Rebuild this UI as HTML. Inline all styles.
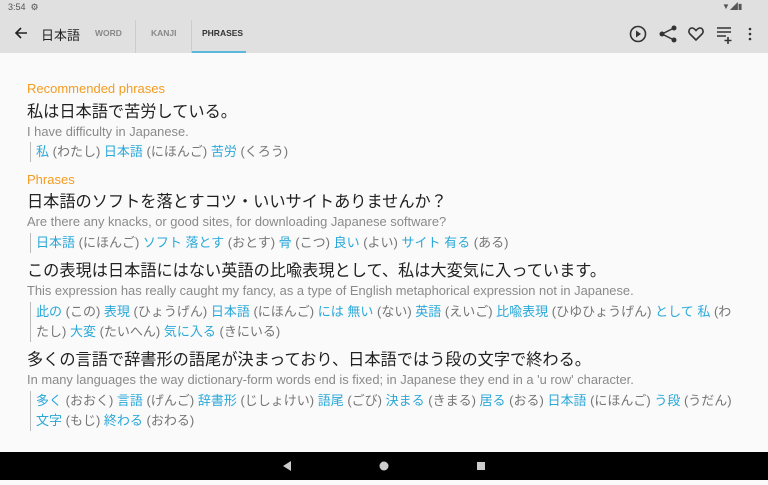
<!DOCTYPE html>
<html><head><meta charset="utf-8"><style>
body{margin:0;width:768px;height:480px;overflow:hidden;background:#fafafa;font-family:"Liberation Sans","Noto Sans CJK JP",sans-serif;position:relative}
.top{position:absolute;left:0;top:0;width:768px;height:53px;background:#e0e0e0}
.l{position:absolute;left:27px;white-space:nowrap;line-height:20px}
.h{color:#f39c1f;font-size:13px}
.j{font-size:16.2px;color:#212121}
.e{font-size:12.9px;color:#8a8a8a}
.g{font-size:13px;color:#757575;left:30px;border-left:1px solid #bbb;padding-left:5px}
.g b{font-weight:normal;color:#2aa8d8}
.tab{position:absolute;top:28px;font-size:8.5px;font-weight:bold;color:#888}
.nav{position:absolute;left:0;top:452px;width:768px;height:28px;background:#000}
</style></head><body>
<div class="top">
<div style="position:absolute;left:8px;top:2px;font-size:9px;color:#555">3:54 &nbsp;⚙</div>
<div style="position:absolute;left:722px;top:1px;font-size:8px;color:#555">▼◢▮</div>
<svg style="position:absolute;left:14px;top:26px" width="14" height="14" viewBox="0 0 14 14"><path d="M13 7H2M7 2L2 7l5 5" stroke="#222" stroke-width="1.6" fill="none"/></svg>
<div style="position:absolute;left:41px;top:25px;font-size:13px;color:#222">日本語</div>
<div class="tab" style="left:95px">WORD</div>
<div style="position:absolute;left:135px;top:20px;width:1px;height:33px;background:#ccc"></div>
<div class="tab" style="left:151px">KANJI</div>
<div style="position:absolute;left:191px;top:20px;width:1px;height:33px;background:#ccc"></div>
<div class="tab" style="left:202px;color:#333">PHRASES</div>
<div style="position:absolute;left:192px;top:51px;width:54px;height:2px;background:#5bb8dc"></div>
<svg style="position:absolute;left:628px;top:24px" width="130" height="20" viewBox="0 0 130 20">
<circle cx="10" cy="10" r="7.5" stroke="#333" stroke-width="1.6" fill="none"/><path d="M8 6.5v7l5-3.5z" fill="#333"/>
<circle cx="46" cy="4" r="2.5" fill="#333"/><circle cx="34" cy="10" r="2.5" fill="#333"/><circle cx="46" cy="16" r="2.5" fill="#333"/><path d="M46 4L34 10 46 16" stroke="#333" stroke-width="1.5" fill="none"/>
<path d="M68 16l-6-6c-2-2-1-6 2-6 2 0 3 1.5 4 2.5 1-1 2-2.5 4-2.5 3 0 4 4 2 6z" stroke="#333" stroke-width="1.6" fill="none"/>
<path d="M89 4h14M89 8h14M89 12h9M100 13v7M96.5 16.5h7" stroke="#333" stroke-width="1.6"/>
<circle cx="122" cy="5" r="1.3" fill="#333"/><circle cx="122" cy="10" r="1.3" fill="#333"/><circle cx="122" cy="15" r="1.3" fill="#333"/>
</svg>
</div>
<div class="l h" style="top:79px">Recommended phrases</div>
<div class="l j" style="top:102px">私は日本語で苦労している。</div>
<div class="l e" style="top:122px">I have difficulty in Japanese.</div>
<div class="l g" style="top:142px"><b>私</b> (わたし) <b>日本語</b> (にほんご) <b>苦労</b> (くろう)</div>
<div class="l h" style="top:170px">Phrases</div>
<div class="l j" style="top:192px">日本語のソフトを落とすコツ・いいサイトありませんか？</div>
<div class="l e" style="top:212px">Are there any knacks, or good sites, for downloading Japanese software?</div>
<div class="l g" style="top:233px"><b>日本語</b> (にほんご) <b>ソフト</b> <b>落とす</b> (おとす) <b>骨</b> (こつ) <b>良い</b> (よい) <b>サイト</b> <b>有る</b> (ある)</div>
<div class="l j" style="top:261px">この表現は日本語にはない英語の比喩表現として、私は大変気に入っています。</div>
<div class="l e" style="top:281px">This expression has really caught my fancy, as a type of English metaphorical expression not in Japanese.</div>
<div class="l g" style="top:302px;line-height:20px;white-space:normal;width:700px"><b>此の</b> (この) <b>表現</b> (ひょうげん) <b>日本語</b> (にほんご) <b>には</b> <b>無い</b> (ない) <b>英語</b> (えいご) <b>比喩表現</b> (ひゆひょうげん) <b>として</b> <b>私</b> (わたし) <b>大変</b> (たいへん) <b>気に入る</b> (きにいる)</div>
<div class="l j" style="top:350px">多くの言語で辞書形の語尾が決まっており、日本語ではう段の文字で終わる。</div>
<div class="l e" style="top:370px">In many languages the way dictionary-form words end is fixed; in Japanese they end in a 'u row' character.</div>
<div class="l g" style="top:391px;white-space:normal;width:700px"><b>多く</b> (おおく) <b>言語</b> (げんご) <b>辞書形</b> (じしょけい) <b>語尾</b> (ごび) <b>決まる</b> (きまる) <b>居る</b> (おる) <b>日本語</b> (にほんご) <b>う段</b> (うだん) <b>文字</b> (もじ) <b>終わる</b> (おわる)</div>
<div class="nav">
<svg width="768" height="28"><path d="M283 466l8-5v10z" transform="translate(0,-452)" fill="#ccc"/><circle cx="384" cy="14" r="4.5" fill="#ccc"/><rect x="477" y="10" width="8" height="8" fill="#ccc"/></svg>
</div>
</body></html>
